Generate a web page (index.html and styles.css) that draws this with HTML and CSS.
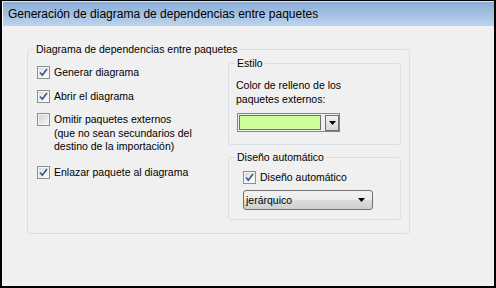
FILE: index.html
```html
<!DOCTYPE html>
<html lang="es">
<head>
    <meta charset="UTF-8">
    <meta name="viewport" content="width=device-width, initial-scale=1.0">
    <title>Generación de diagrama de dependencias entre paquetes</title>
    <link rel="stylesheet" href="styles.css">
</head>
<body>
    <div class="window">
        <div class="titlebar">Generación de diagrama de dependencias entre paquetes</div>
        <div class="client">
            <fieldset class="group main">
                <legend>Diagrama de dependencias entre paquetes</legend>
                <div class="cols">
                    <div class="left">
                        <div class="check">
                            <span class="box"><svg width="11" height="11" viewBox="0 0 11 11"><path d="M2 5.5 L4.3 8.2 L9 2" fill="none" stroke="#3b5894" stroke-width="1.7"/></svg></span>
                            <span>Generar diagrama</span>
                        </div>
                        <div class="check row2">
                            <span class="box"><svg width="11" height="11" viewBox="0 0 11 11"><path d="M2 5.5 L4.3 8.2 L9 2" fill="none" stroke="#3b5894" stroke-width="1.7"/></svg></span>
                            <span>Abrir el diagrama</span>
                        </div>
                        <div class="check row3">
                            <span class="box off"></span>
                            <span>Omitir paquetes externos<br>(que no sean secundarios del<br>destino de la importación)</span>
                        </div>
                        <div class="check row4">
                            <span class="box"><svg width="11" height="11" viewBox="0 0 11 11"><path d="M2 5.5 L4.3 8.2 L9 2" fill="none" stroke="#3b5894" stroke-width="1.7"/></svg></span>
                            <span>Enlazar paquete al diagrama</span>
                        </div>
                    </div>
                    <div class="right">
                        <fieldset class="group sub estilo">
                            <legend>Estilo</legend>
                            <p class="label">Color de relleno de los<br>paquetes externos:</p>
                            <div class="colorcombo">
                                <span class="swatch"></span>
                                <span class="dropbtn"><svg width="7" height="4" viewBox="0 0 7 4"><path d="M0 0 H7 L3.5 4 Z" fill="#000"/></svg></span>
                            </div>
                        </fieldset>
                        <fieldset class="group sub diseno">
                            <legend>Diseño automático</legend>
                            <div class="check">
                                <span class="box"><svg width="11" height="11" viewBox="0 0 11 11"><path d="M2 5.5 L4.3 8.2 L9 2" fill="none" stroke="#3b5894" stroke-width="1.7"/></svg></span>
                                <span>Diseño automático</span>
                            </div>
                            <div class="select">
                                <span>jerárquico</span>
                                <svg width="7" height="4" viewBox="0 0 7 4"><path d="M0 0 H7 L3.5 4 Z" fill="#000"/></svg>
                            </div>
                        </fieldset>
                    </div>
                </div>
            </fieldset>
        </div>
    </div>
</body>
</html>
```

FILE: styles.css
```css
* {
    box-sizing: border-box;
}
body {
    margin: 0;
    font-family: "Liberation Sans", Arial, sans-serif;
    font-size: 10.5px;
    color: #000;
}
.window {
    width: 496px;
    height: 288px;
    border: 2px solid #000;
    border-top: 1px solid #000;
    background-color: #f0f0f0;
    display: flex;
    flex-direction: column;
}
.titlebar {
    height: 25px;
    border-top: 1px solid #dde6f0;
    border-left: 1px solid #fff;
    background: linear-gradient(#8badd6, #bcd3ec);
    font-size: 12px;
    line-height: 22px;
    padding: 1px 0 0 5px;
}
.client {
    flex: 1;
    padding: 17px 0 0 25px;
}
.group {
    margin: 0;
    border: 1px solid #d5dfe5;
    border-radius: 3px;
    min-width: 0;
}
.group legend {
    padding: 0 2px;
    line-height: 13px;
}
.main {
    width: 383px;
    padding: 1px 8px 13px 9px;
}
.main > legend {
    margin-left: -3px;
}
.cols {
    display: flex;
}
.left {
    flex: 1;
    padding-top: 9px;
}
.right {
    width: 173px;
}
.check {
    display: flex;
    align-items: flex-start;
    gap: 4px;
    line-height: 13px;
}
.row2 {
    margin-top: 11px;
}
.row3 {
    margin-top: 10px;
}
.row3 span:last-child {
    line-height: 13.5px;
}
.row4 {
    margin-top: 12px;
}
.box {
    width: 13px;
    height: 13px;
    flex: none;
    border: 1px solid #8e8f8f;
    background: linear-gradient(135deg, #d8d8d8, #f6f6f6 70%, #fff);
    box-shadow: inset 0 0 0 1px #f4f4f4;
    display: flex;
    align-items: center;
    justify-content: center;
}
.box.off {
    background: linear-gradient(135deg, #cfcfcf, #ececec 70%, #f8f8f8);
}
.sub {
    padding: 8px 8px 12px 8px;
}
.sub > legend {
    margin-left: -2px;
}
.label {
    margin: 0 0 0 -1px;
    line-height: 14px;
}
.colorcombo {
    margin-top: 7px;
    width: 103px;
    height: 19px;
    border: 1px solid #3399ff;
    padding: 1px 0 0 1px;
    display: flex;
    align-items: flex-start;
}
.swatch {
    width: 83px;
    height: 15px;
    border: 1px solid #6f6f6f;
    background-color: #ccff99;
}
.dropbtn {
    margin-left: 4px;
    width: 14px;
    height: 16px;
    border: 1px solid #707070;
    background: linear-gradient(#f2f2f2, #d6d6d6);
    display: flex;
    align-items: center;
    justify-content: center;
}
.diseno {
    margin-top: 6px;
    padding: 7px 8px 9px 14px;
}
.diseno > legend {
    margin-left: -8px;
}
.select {
    margin-top: 6px;
    width: 130px;
    height: 20px;
    border: 1px solid #707070;
    border-radius: 3px;
    background: linear-gradient(#f2f2f2, #ebebeb 50%, #dddddd 50%, #cfcfcf);
    padding: 0 7px 0 2px;
    display: flex;
    align-items: center;
    justify-content: space-between;
}
```
